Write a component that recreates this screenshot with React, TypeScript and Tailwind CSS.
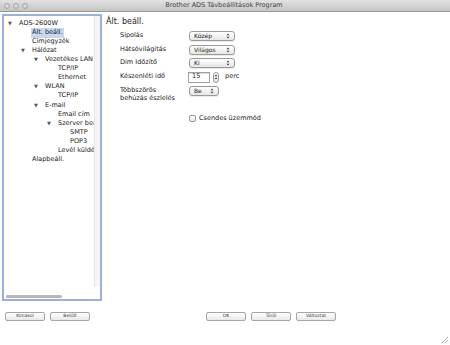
import React from 'react';

type Node = { label: string; depth: number; open?: boolean; selected?: boolean };

const tree: Node[] = [
  { label: 'ADS-2600W', depth: 0, open: true },
  { label: 'Ált. beáll.', depth: 1, selected: true },
  { label: 'Címjegyzék', depth: 1 },
  { label: 'Hálózat', depth: 1, open: true },
  { label: 'Vezetékes LAN', depth: 2, open: true },
  { label: 'TCP/IP', depth: 3 },
  { label: 'Ethernet', depth: 3 },
  { label: 'WLAN', depth: 2, open: true },
  { label: 'TCP/IP', depth: 3 },
  { label: 'E-mail', depth: 2, open: true },
  { label: 'Email cím', depth: 3 },
  { label: 'Szerver beállítás', depth: 3, open: true },
  { label: 'SMTP', depth: 4 },
  { label: 'POP3', depth: 4 },
  { label: 'Levél küldés', depth: 3 },
  { label: 'Alapbeáll.', depth: 1 },
];

const indent = ['pl-[15px]', 'pl-[28px]', 'pl-[41px]', 'pl-[54px]', 'pl-[66px]'];

const Arrows = () => (
  <svg width="4" height="6" viewBox="0 0 4 6" className="shrink-0">
    <path d="M0.5 2.3L2 0.6L3.5 2.3Z M0.5 3.7L2 5.4L3.5 3.7Z" fill="#444" />
  </svg>
);

const Select = ({ value, w }: { value: string; w: string }) => (
  <div className={`${w} h-[10px] flex items-center justify-between rounded-[3px] border border-[#9a9a9a] bg-gradient-to-b from-white to-[#e6e6e6] pl-[4px] pr-[4px] shadow-[0_1px_0_rgba(0,0,0,0.08)]`}>
    <span className="text-[6px] leading-none text-[#222]">{value}</span>
    <Arrows />
  </div>
);

const Btn = ({ label }: { label: string }) => (
  <div className="w-[40px] h-[9px] flex items-center justify-center rounded-[2px] border border-[#a5a5a5] bg-gradient-to-b from-white to-[#e8e8e8] text-[4.5px] text-[#333]">
    {label}
  </div>
);

const App: React.FC = () => {
  return (
    <div className="w-[450px] h-[345px] bg-white flex flex-col overflow-hidden" style={{ fontFamily: '"DejaVu Sans", "Liberation Sans", sans-serif' }}>
      {/* Title bar */}
      <div className="h-[12px] shrink-0 flex items-center bg-gradient-to-b from-[#e2e2e2] to-[#c4c4c4] border-b border-[#9a9a9a]">
        <div className="flex gap-[3px] pl-[4px]">
          <span className="w-[6px] h-[6px] rounded-full border border-[#a8a8a8] bg-[#d6d6d6]" />
          <span className="w-[6px] h-[6px] rounded-full border border-[#a8a8a8] bg-[#d6d6d6]" />
          <span className="w-[6px] h-[6px] rounded-full border border-[#a8a8a8] bg-[#d6d6d6]" />
        </div>
        <div className="flex-1 text-center text-[6.5px] text-[#444] pr-[30px]">Brother ADS Távbeállítások Program</div>
      </div>

      <div className="flex h-[289px] shrink-0 pt-[2px]">
        {/* Tree panel */}
        <div className="ml-[2px] w-[100px] h-[287px] border-2 border-[#9cb0de] flex flex-col">
          <div className="flex flex-1 min-h-0">
            <div className="w-[90px] overflow-hidden pt-[3px] text-[6.5px] text-[#222]">
              {tree.map((n, i) => (
                <div key={i} className={`h-[9.1px] flex items-center whitespace-nowrap relative ${indent[n.depth]}`}>
                  {n.open && (
                    <span className="absolute text-[5px] text-[#555]" style={{ left: n.depth * 13 + 4 }}>▼</span>
                  )}
                  <span className={n.selected ? 'bg-[#c9d6ef] px-[1px] -ml-[1px]' : ''}>{n.label}</span>
                </div>
              ))}
            </div>
            <div className="w-[6px] border-l border-[#e6e6e6] bg-[#f6f6f6] mb-[6px]" />
          </div>
          <div className="h-[6px] flex items-center pl-[2px]">
            <div className="w-[56px] h-[3px] rounded-full bg-[#b8b8b8]" />
          </div>
        </div>

        {/* Settings */}
        <div className="flex-1 pl-[4px] pt-[4px] text-[#222]">
          <div className="text-[8px] leading-none mb-[5px]">Ált. beáll.</div>
          <div className="pl-[14px] text-[6.5px] flex flex-col gap-[3.5px]">
            <div className="flex items-center">
              <span className="w-[69px]">Sípolás</span>
              <Select value="Közép" w="w-[46px]" />
            </div>
            <div className="flex items-center">
              <span className="w-[69px]">Hátsóvilágítás</span>
              <Select value="Világos" w="w-[46px]" />
            </div>
            <div className="flex items-center">
              <span className="w-[69px]">Dim Időzítő</span>
              <Select value="Ki" w="w-[46px]" />
            </div>
            <div className="flex items-center">
              <span className="w-[68px]">Készenléti idő</span>
              <div className="w-[22px] h-[11px] border border-[#a0a0a0] shadow-[inset_0_1px_1px_rgba(0,0,0,0.15)] flex items-center pl-[3px] text-[6.5px]">15</div>
              <div className="ml-[3px] w-[6px] h-[11px] rounded-[3px] border border-[#9a9a9a] bg-gradient-to-b from-white to-[#e6e6e6] flex items-center justify-center">
                <Arrows />
              </div>
              <span className="ml-[6px]">perc</span>
            </div>
            <div className="flex items-start">
              <span className="w-[69px] leading-[8px]">Többszörös<br />behúzás észlelés</span>
              <Select value="Be" w="w-[30px]" />
            </div>
            <div className="flex items-center pl-[69px] mt-[8px]">
              <span className="w-[7px] h-[7px] rounded-[2px] border border-[#9a9a9a] bg-gradient-to-b from-white to-[#e8e8e8]" />
              <span className="ml-[3px] text-[#222]">Csendes üzemmód</span>
            </div>
          </div>
        </div>
      </div>

      {/* Bottom buttons */}
      <div className="flex-1 flex items-start pt-[11px] relative">
        <div className="flex gap-[5px] pl-[5px]">
          <Btn label="Kimásol" />
          <Btn label="Betölt" />
        </div>
        <div className="flex gap-[5px] ml-[116px]">
          <Btn label="OK" />
          <Btn label="Töröl" />
          <Btn label="Változtat" />
        </div>
        <svg className="absolute right-[1px] bottom-[1px]" width="8" height="8" viewBox="0 0 8 8">
          <path d="M7 1L1 7M7 4L4 7M7 6.5L6.5 7" stroke="#999" strokeWidth="0.8" />
        </svg>
      </div>
    </div>
  );
};

export default App;
